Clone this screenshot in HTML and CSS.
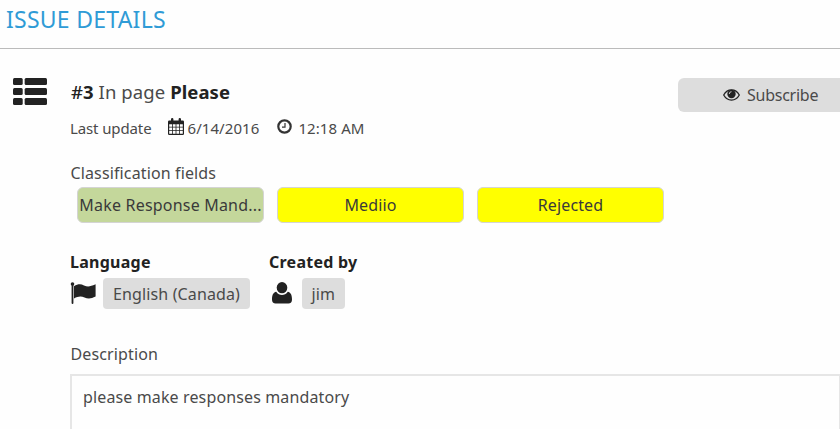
FILE: index.html
```html
<!DOCTYPE html>
<html lang="en">
<head>
    <meta charset="UTF-8">
    <meta name="viewport" content="width=device-width, initial-scale=1.0">
    <title>Issue Details</title>
    <link rel="stylesheet" href="styles.css">
</head>
<body>
    <header class="page-header">
        <h1>ISSUE DETAILS</h1>
    </header>
    <main class="issue">
        <svg class="icon-list" width="34" height="27" viewBox="0 0 35 27" preserveAspectRatio="none">
            <rect x="0" y="0" width="10" height="7" rx="1.5"/>
            <rect x="12" y="0" width="23" height="7" rx="1.5"/>
            <rect x="0" y="10" width="10" height="7" rx="1.5"/>
            <rect x="12" y="10" width="23" height="7" rx="1.5"/>
            <rect x="0" y="20" width="10" height="7" rx="1.5"/>
            <rect x="12" y="20" width="23" height="7" rx="1.5"/>
        </svg>
        <div class="details">
            <div class="top-row">
                <h2><span class="hash">#</span><b>3</b> In page <b>Please</b></h2>
                <button class="subscribe" type="button">
                    <svg width="17" height="12" viewBox="0 0 17 12">
                        <path d="M.7 6C2.5 2.7 5.2 .9 8.5 .9S14.5 2.7 16.3 6C14.5 9.3 11.8 11.1 8.5 11.1S2.5 9.3 .7 6Z" fill="none" stroke="#222" stroke-width="1.3"/>
                        <circle cx="8.5" cy="5" r="4.2"/>
                        <path d="M6.3 5A2.2 2.2 0 0 1 8.5 2.7" fill="none" stroke="#ddd" stroke-width=".9"/>
                    </svg>
                    <span>Subscribe</span>
                </button>
            </div>
            <div class="meta">
                <span class="update">Last update</span>
                <svg class="icon-calendar" width="16" height="17" viewBox="0 0 16 17">
                    <path fill-rule="evenodd" d="M1.3 2.5H3V1.2Q3 0 4.2 0T5.4 1.2V2.5H10.6V1.2Q10.6 0 11.8 0T13 1.2V2.5H14.7Q16 2.5 16 3.8V15.7Q16 17 14.7 17H1.3Q0 17 0 15.7V3.8Q0 2.5 1.3 2.5ZM1.2 6.3V8.8H4V6.3ZM4.8 6.3V8.8H7.6V6.3ZM8.4 6.3V8.8H11.2V6.3ZM12 6.3V8.8H14.8V6.3ZM1.2 9.6V12.3H4V9.6ZM4.8 9.6V12.3H7.6V9.6ZM8.4 9.6V12.3H11.2V9.6ZM12 9.6V12.3H14.8V9.6ZM1.2 13.1V15.8H4V13.1ZM4.8 13.1V15.8H7.6V13.1ZM8.4 13.1V15.8H11.2V13.1ZM12 13.1V15.8H14.8V13.1Z"/>
                </svg>
                <span>6/14/2016</span>
                <svg class="icon-clock" width="15" height="15" viewBox="0 0 15 15">
                    <circle cx="7.5" cy="7.5" r="6.2" fill="none" stroke="#333" stroke-width="2.2"/>
                    <path d="M8 4V8.2H5" fill="none" stroke="#333" stroke-width="1.2"/>
                </svg>
                <span>12:18 AM</span>
            </div>
            <div class="field-label">Classification fields</div>
            <div class="pills">
                <div class="pill green">Make Response Mand...</div>
                <div class="pill">Mediio</div>
                <div class="pill">Rejected</div>
            </div>
            <div class="people">
                <div class="language">
                    <h3>Language</h3>
                    <div class="tag-row">
                        <svg class="icon-flag" width="26" height="22" viewBox="0 0 26 22">
                            <circle cx="2.5" cy="2" r="1.8"/>
                            <path d="M1.6 2H3.4V21Q3.4 22 2.5 22T1.6 21Z"/>
                            <path d="M4 4.2C8 1.6 11 1.8 14 3.4C18 5.3 20 4.600 25.600 2.3V14.6C21 16.800 18 17 14.5 15.4C11 13.8 8 14.200 4 16.400Z"/>
                        </svg>
                        <span class="tag">English (Canada)</span>
                    </div>
                </div>
                <div class="creator">
                    <h3>Created by</h3>
                    <div class="tag-row">
                        <svg class="icon-user" width="20" height="22" viewBox="0 0 20 22">
                            <ellipse cx="10" cy="5.7" rx="5.3" ry="5.6"/>
                            <path d="M4.2 9.8C5.6 12 8 12.9 10 12.9S14.4 12 15.8 9.8C19 10.5 20 13.5 20 17.5Q20 21.5 16.3 21.5H3.7Q0 21.5 0 17.5C0 13.5 1 10.5 4.2 9.8Z"/>
                        </svg>
                        <span class="tag jim">jim</span>
                    </div>
                </div>
            </div>
            <div class="field-label description-label">Description</div>
            <div class="description">please make responses mandatory</div>
        </div>
    </main>
</body>
</html>
```
FILE: styles.css
```css
body {
    margin: 0;
    height: 429px;
    overflow: hidden;
    background: #fefefe;
    color: #4a4a4a;
    font-family: "Noto Sans", "Open Sans", sans-serif;
    font-size: 16px;
    line-height: 22px;
    letter-spacing: 0.13px;
}
h1, h2, h3 {
    margin: 0;
    font-weight: normal;
}
span {
    white-space: nowrap;
}
svg {
    flex: none;
    fill: #222;
}
.page-header {
    height: 48px;
    border-bottom: 1px solid #bbb;
}
h1 {
    padding-left: 6px;
    color: #2f9bd6;
    font-size: 23px;
    letter-spacing: 0.25px;
    line-height: 38px;
}
.issue {
    display: flex;
    padding: 29px 0 0 13px;
}
.icon-list {
    margin-right: 23px;
}
.details {
    flex: 1;
    min-width: 0;
}
.top-row {
    display: flex;
    justify-content: space-between;
    height: 34px;
}
h2 {
    padding-left: 1px;
    font-size: 18.5px;
    letter-spacing: 0.08px;
    line-height: 28px;
}
h2 b {
    color: #222;
}
.hash {
    color: #222;
    font-weight: 500;
}
.subscribe {
    display: flex;
    align-items: center;
    gap: 7px;
    box-sizing: border-box;
    width: 162px;
    height: 34px;
    padding: 0 0 0 45px;
    border: 0;
    border-radius: 6px 0 0 6px;
    background: #ddd;
    color: #4a4a4a;
    font: inherit;
    letter-spacing: -0.25px;
}
.subscribe svg {
    margin-bottom: 1px;
}
.meta {
    display: flex;
    align-items: center;
    height: 22px;
    margin-top: 5px;
    font-size: 15px;
    letter-spacing: 0.08px;
}
.update {
    letter-spacing: -0.12px;
}
.icon-calendar {
    margin: 0 3px 4px 17px;
}
.icon-clock {
    margin: 0 6px 4px 18px;
}
.field-label {
    margin-top: 23px;
    padding-left: 0.5px;
}
.pills {
    display: flex;
    gap: 13px;
    margin: 3px 0 0 7px;
}
.pill {
    box-sizing: border-box;
    width: 187px;
    height: 36px;
    border: 1px solid #d4d4d4;
    border-radius: 6px;
    background: #ff0;
    color: #3a3a3a;
    line-height: 35px;
    text-align: center;
    white-space: nowrap;
}
.green {
    background: #c4d79b;
    letter-spacing: 0.2px;
}
.people {
    display: flex;
    margin-top: 28px;
}
.language {
    width: 199px;
}
h3 {
    color: #222;
    font-size: 16px;
    font-weight: bold;
    letter-spacing: 0.25px;
    line-height: 22px;
}
.tag-row {
    display: flex;
    margin-top: 5px;
}
.icon-flag {
    margin: 4px 7px 0 0;
}
.icon-user {
    margin: 4px 10px 0 3px;
}
.tag {
    height: 31px;
    padding: 0 10px;
    border-radius: 4px;
    background: #ddd;
    line-height: 32px;
}
.jim {
    padding: 0 9.5px;
}
.description-label {
    margin-top: 34px;
}
.description {
    height: 53px;
    margin-top: 9px;
    padding: 0 11px;
    border: 2px solid #e6e6e6;
    border-right-width: 1px;
    border-bottom: 0;
    line-height: 43px;
}
```
